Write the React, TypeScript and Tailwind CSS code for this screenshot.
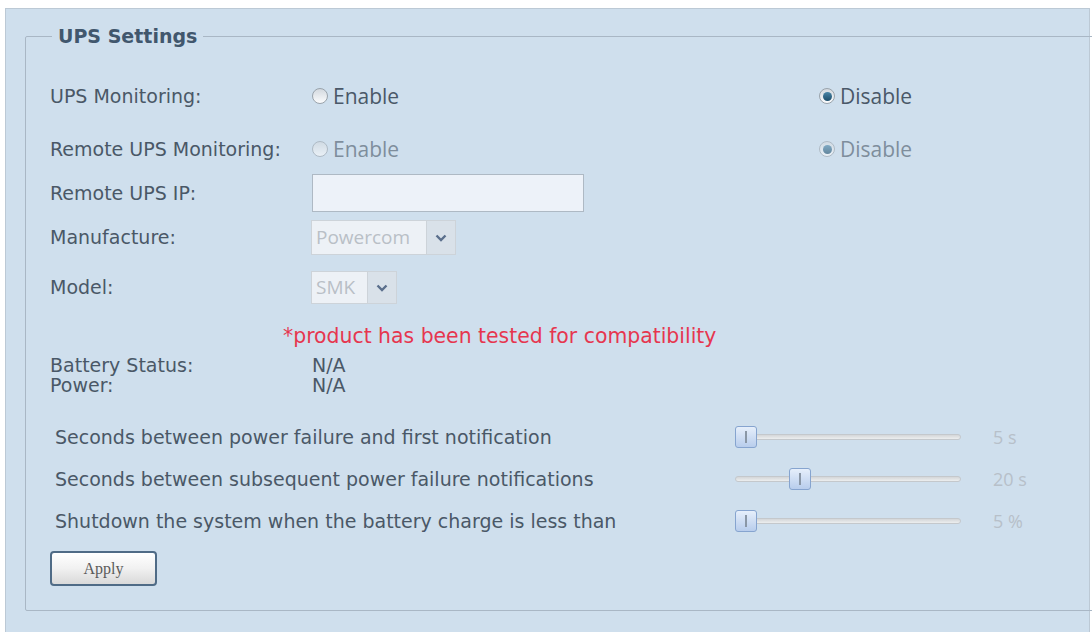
import React from 'react';

const labelFont = { fontFamily: '"DejaVu Sans", Verdana, sans-serif' };
const uiFont = { fontFamily: '"Open Sans", "Noto Sans", sans-serif' };

const Radio: React.FC<{ checked?: boolean; disabled?: boolean; label: string }> = ({ checked, disabled, label }) => (
  <label className={`flex items-center gap-[5px] ${disabled ? 'opacity-60' : ''}`}>
    <span className="flex h-[16px] w-[16px] items-center justify-center rounded-full border border-[#9aa3ab] bg-gradient-to-b from-[#d3d9df] to-[#fbfcfd]">
      {checked && <span className="h-[9px] w-[9px] rounded-full bg-gradient-to-b from-[#4a86a8] to-[#1d4d6a]" />}
    </span>
    <span className="text-[21px] leading-none text-[#4a5868]" style={uiFont}>{label}</span>
  </label>
);

const Select: React.FC<{ value: string; width: string }> = ({ value, width }) => (
  <div className="flex h-full">
    <div className={`${width} flex items-center border border-[#cdd3d9] bg-[#edf1f6] pl-[4px] text-[19px] text-[#b9bfc6]`} style={uiFont}>
      {value}
    </div>
    <div className="flex w-[29px] items-center justify-center border border-l-0 border-[#cdd3d9] bg-[#d9e1e9]">
      <svg width="12" height="8" viewBox="0 0 12 8">
        <path d="M1.5 1.5 L6 6 L10.5 1.5" fill="none" stroke="#5b6f8c" strokeWidth="2.4" />
      </svg>
    </div>
  </div>
);

const Slider: React.FC<{ offset: number }> = ({ offset }) => (
  <div className="relative h-[24px] w-[226px]">
    <div className="absolute left-0 right-0 top-[9px] h-[6px] rounded-full border border-[#c4c8cc] bg-gradient-to-b from-[#d4d6d8] to-[#eceeef]" />
    <div
      className="absolute top-[1px] flex h-[22px] w-[22px] items-center justify-center rounded-[3px] border border-[#86a4cf] bg-gradient-to-b from-[#e6effb] to-[#b8cdec]"
      style={{ left: offset }}
    >
      <span className="h-[12px] w-[2px] bg-[#8a97a6]" />
    </div>
  </div>
);

const App: React.FC = () => {
  return (
    <div className="h-[632px] w-[1092px] overflow-hidden bg-white pl-[5px] pt-[8px]">
      <div className="h-[640px] w-[1085px] border-l border-r border-t border-[#bcc9d5] bg-[#cfdfed] pl-[19px] pt-[17px]">
        <fieldset className="w-[1080px] rounded-[2px] border border-[#a9b7c5] px-[24px] pb-[24px] pt-0" style={labelFont}>
          <legend className="ml-[2px] h-[20px] px-[6px] text-[19px] font-bold leading-[20px] text-[#41576d]">UPS Settings</legend>

          <div className="mt-[30px] flex h-[40px] items-center text-[19px] text-[#4a5867]">
            <span className="w-[262px]">UPS Monitoring:</span>
            <div className="w-[507px]"><Radio label="Enable" /></div>
            <Radio checked label="Disable" />
          </div>

          <div className="mt-[13px] flex h-[40px] items-center text-[19px] text-[#4a5867]">
            <span className="w-[262px]">Remote UPS Monitoring:</span>
            <div className="w-[507px]"><Radio disabled label="Enable" /></div>
            <Radio disabled checked label="Disable" />
          </div>

          <div className="mt-[5px] flex h-[38px] items-center text-[19px] text-[#4a5867]">
            <span className="w-[262px]">Remote UPS IP:</span>
            <input className="h-full w-[272px] border border-[#aeb9c4] bg-[#edf2f9] outline-none" disabled />
          </div>

          <div className="mt-[8px] flex h-[35px] items-center text-[19px] text-[#4a5867]">
            <span className="w-[261px]">Manufacture:</span>
            <Select value="Powercom" width="w-[116px]" />
          </div>

          <div className="mt-[16px] flex h-[33px] items-center text-[19px] text-[#4a5867]">
            <span className="w-[261px]">Model:</span>
            <Select value="SMK" width="w-[57px]" />
          </div>

          <div className="mt-[22px] flex h-[20px] items-center pl-[233px] text-[20.4px] text-[#e6364f]">
            *product has been tested for compatibility
          </div>

          <div className="mt-[9px] flex h-[20px] items-center text-[19px] text-[#4a5867]">
            <span className="w-[262px]">Battery Status:</span>
            <span>N/A</span>
          </div>
          <div className="flex h-[20px] items-center text-[19px] text-[#4a5867]">
            <span className="w-[262px]">Power:</span>
            <span>N/A</span>
          </div>

          {[
            { text: 'Seconds between power failure and first notification', offset: 0, value: '5 s', mt: 'mt-[28px]' },
            { text: 'Seconds between subsequent power failure notifications', offset: 54, value: '20 s', mt: 'mt-[14px]' },
            { text: 'Shutdown the system when the battery charge is less than', offset: 0, value: '5 %', mt: 'mt-[14px]' },
          ].map((row) => (
            <div key={row.text} className={`${row.mt} flex h-[28px] items-center text-[19px] text-[#4a5867]`}>
              <span className="w-[685px] pl-[5px]">{row.text}</span>
              <Slider offset={row.offset} />
              <span className="ml-[32px] text-[18px] text-[#b7c0c9]" style={uiFont}>{row.value}</span>
            </div>
          ))}

          <button
            className="mt-[16px] block h-[35px] w-[107px] rounded-[4px] border-2 border-[#4f6b86] bg-gradient-to-b from-[#ffffff] via-[#f1f1f1] to-[#d9d9d9] text-[16px] text-[#5a5a5a]"
            style={{ fontFamily: '"Liberation Serif", "Times New Roman", serif' }}
          >
            Apply
          </button>
        </fieldset>
      </div>
    </div>
  );
};

export default App;
